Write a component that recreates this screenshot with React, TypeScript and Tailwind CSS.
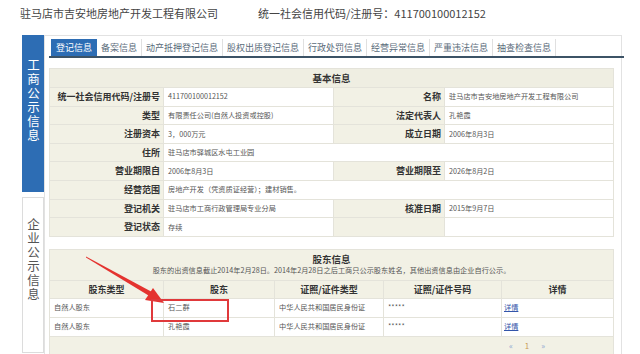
import React from "react";

const TABS = [
  "登记信息",
  "备案信息",
  "动产抵押登记信息",
  "股权出质登记信息",
  "行政处罚信息",
  "经营异常信息",
  "严重违法信息",
  "抽查检查信息",
];

const font = { fontFamily: '"Noto Sans CJK SC", "Liberation Sans", sans-serif' };

function Label({ children }: { children?: React.ReactNode }) {
  return (
    <td className="bg-[#f2f1e5] text-right pr-[3px] font-bold text-[9px] text-[#333] border border-[#e4e3da] whitespace-nowrap">
      {children}
    </td>
  );
}

function Value({ children, span }: { children?: React.ReactNode; span?: number }) {
  return (
    <td colSpan={span} className="bg-white pl-[4px] text-[7.2px] text-[#555] border border-[#e4e3da] whitespace-nowrap">
      {children}
    </td>
  );
}

export default function App() {
  return (
    <div className="relative w-[640px] h-[354px] overflow-hidden bg-white" style={font}>
      {/* page header */}
      <div className="h-[35px] flex items-start pt-[5px] pl-[20px] text-[11px] text-[#444]">
        <span className="w-[238px]">驻马店市吉安地房地产开发工程有限公司</span>
        <span>统一社会信用代码/注册号：411700100012152</span>
      </div>

      <div className="flex pl-[22px]">
        {/* sidebar */}
        <div className="w-[22px] flex flex-col">
          <div className="h-[157px] bg-[#2d6db4] flex justify-center pt-[24px] text-white">
            <span className="[writing-mode:vertical-rl] text-[12.5px] leading-[14px] tracking-[1.5px]">工商公示信息</span>
          </div>
          <div className="mt-[5px] h-[156px] border border-[#dcdcdc] flex justify-center pt-[20px] text-[#555]">
            <span className="[writing-mode:vertical-rl] text-[12.5px] leading-[14px] tracking-[1.5px]">企业公示信息</span>
          </div>
        </div>

        {/* main panel */}
        <div className="w-[578px] h-[330px] border-t border-r border-l border-[#e2e2e2] px-[4px]">
          <div className="mt-[3px] flex border-b-2 border-[#3c5366] pl-[2px] mr-[-7px]">
            {TABS.map((t, i) => (
              <div
                key={t}
                className={
                  i === 0
                    ? "h-[17px] px-[5px] flex items-center text-[9px] text-white bg-[#2d6db4]"
                    : "h-[17px] px-[4px] flex items-center text-[9px] text-[#5a6b7a] border-r border-[#e0e0e0]"
                }
              >
                {t}
              </div>
            ))}
          </div>

          {/* basic info */}
          <table className="mt-[10px] w-[564px] table-fixed border-collapse">
            <colgroup>
              <col className="w-[114px]" />
              <col className="w-[170px]" />
              <col className="w-[111px]" />
              <col className="w-[169px]" />
            </colgroup>
            <tbody>
              <tr className="h-[19px]">
                <td colSpan={4} className="bg-[#efeee2] text-center font-bold text-[9.5px] text-[#333] border border-[#e4e3da]">
                  基本信息
                </td>
              </tr>
              <tr className="h-[18.6px]">
                <Label>统一社会信用代码/注册号</Label>
                <Value>411700100012152</Value>
                <Label>名称</Label>
                <Value>驻马店市吉安地房地产开发工程有限公司</Value>
              </tr>
              <tr className="h-[18.6px]">
                <Label>类型</Label>
                <Value>有限责任公司(自然人投资或控股)</Value>
                <Label>法定代表人</Label>
                <Value>孔艳霞</Value>
              </tr>
              <tr className="h-[18.6px]">
                <Label>注册资本</Label>
                <Value>3，000万元</Value>
                <Label>成立日期</Label>
                <Value>2006年8月3日</Value>
              </tr>
              <tr className="h-[18.6px]">
                <Label>住所</Label>
                <Value span={3}>驻马店市驿城区水屯工业园</Value>
              </tr>
              <tr className="h-[18.6px]">
                <Label>营业期限自</Label>
                <Value>2006年8月3日</Value>
                <Label>营业期限至</Label>
                <Value>2026年8月2日</Value>
              </tr>
              <tr className="h-[18.6px]">
                <Label>经营范围</Label>
                <Value span={3}>房地产开发（凭资质证经营）；建材销售。</Value>
              </tr>
              <tr className="h-[18.6px]">
                <Label>登记机关</Label>
                <Value>驻马店市工商行政管理局专业分局</Value>
                <Label>核准日期</Label>
                <Value>2015年9月7日</Value>
              </tr>
              <tr className="h-[18.6px]">
                <Label>登记状态</Label>
                <Value>存续</Value>
                <Label />
                <Value />
              </tr>
            </tbody>
          </table>

          {/* shareholders */}
          <table className="mt-[12px] w-[564px] table-fixed border-collapse">
            <colgroup>
              <col className="w-[114px]" />
              <col className="w-[111px]" />
              <col className="w-[109px]" />
              <col className="w-[118px]" />
              <col className="w-[112px]" />
            </colgroup>
            <tbody>
              <tr className="h-[31px]">
                <td colSpan={5} className="bg-[#f2f1e5] text-center border border-[#e4e3da] leading-[11px]">
                  <div className="font-bold text-[9.5px] text-[#333]">股东信息</div>
                  <div className="text-[7.2px] text-[#555]">
                    股东的出资信息截止2014年2月28日。2014年2月28日之后工商只公示股东姓名，其他出资信息由企业自行公示。
                  </div>
                </td>
              </tr>
              <tr className="h-[18px] bg-[#f2f1e5] text-center font-bold text-[9px] text-[#333]">
                <td className="border border-[#e4e3da]">股东类型</td>
                <td className="border border-[#e4e3da]">股东</td>
                <td className="border border-[#e4e3da]">证照/证件类型</td>
                <td className="border border-[#e4e3da]">证照/证件号码</td>
                <td className="border border-[#e4e3da]">详情</td>
              </tr>
              {["石二群", "孔艳霞"].map((n) => (
                <tr key={n} className="h-[19px] text-[7.2px] text-[#555]">
                  <td className="border border-[#e4e3da] pl-[4px]">自然人股东</td>
                  <td className="border border-[#e4e3da] pl-[4px]">{n}</td>
                  <td className="border border-[#e4e3da] pl-[4px]">中华人民共和国居民身份证</td>
                  <td className="border border-[#e4e3da] pl-[4px]">*****</td>
                  <td className="border border-[#e4e3da] pl-[2px]">
                    <span className="text-[#3355aa] underline">详情</span>
                  </td>
                </tr>
              ))}
              <tr className="h-[19px] bg-[#f2f1e5]">
                <td colSpan={5} className="border border-[#e4e3da]">
                  <div className="flex gap-[12px] pl-[459px] text-[8px] text-[#8aa4d0]">
                    <span>«</span>
                    <span className="text-[#c99a5a]">1</span>
                    <span>»</span>
                  </div>
                </td>
              </tr>
            </tbody>
          </table>
        </div>
      </div>

      {/* annotation overlay */}
      <svg className="absolute left-0 top-0 pointer-events-none" width="640" height="354">
        <polygon points="86,256.5 86,257.5 151,297 152,292" fill="#e4332f" />
        <polygon points="164,303 145,300 153,288" fill="#e4332f" />
        <rect x="152" y="300" width="76" height="21" fill="none" stroke="#e0393b" strokeWidth="2" />
      </svg>
    </div>
  );
}
